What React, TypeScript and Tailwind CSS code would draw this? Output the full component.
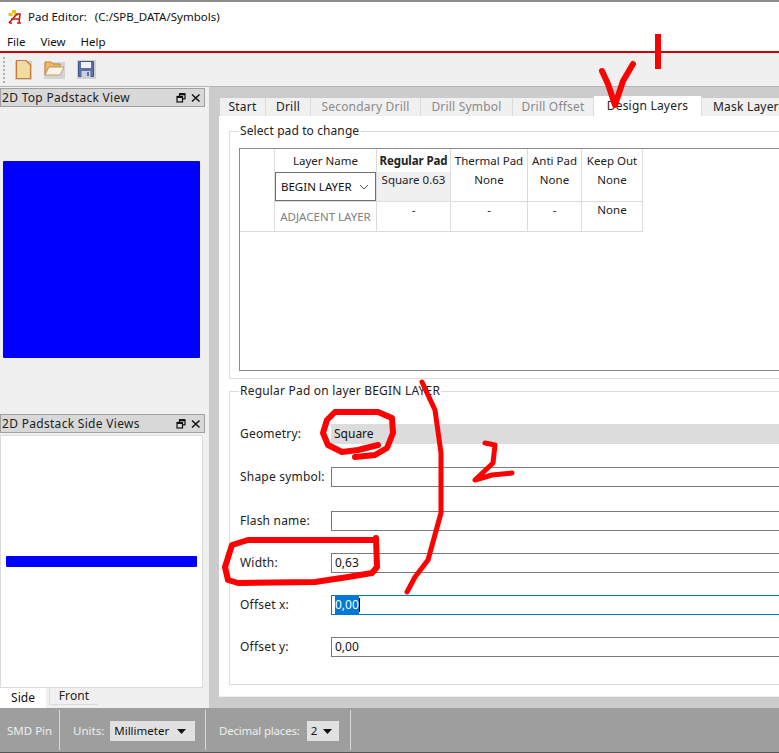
import React from "react";

const font = { fontFamily: '"Noto Sans", "Open Sans", sans-serif' };

function DockHeader({ title }: { title: string }) {
  return (
    <div className="flex h-[19px] w-[205px] items-center justify-between border border-[#a0a0a0] bg-[#d8d8d8] pl-[1px] pr-[3px] text-[12px] tracking-[0.3px] text-[#222]">
      <span>{title}</span>
      <span className="flex items-center gap-[5px]">
        <svg width="10" height="10" viewBox="0 0 10 10" fill="none" stroke="#111" strokeWidth="1.2">
          <rect x="3.5" y="0.8" width="5.5" height="5" />
          <rect x="1" y="3.5" width="5.5" height="5.5" fill="#d8d8d8" />
          <path d="M1 4h5.5M3.5 1.2h5.5" strokeWidth="2" />
        </svg>
        <svg width="10" height="10" viewBox="0 0 10 10" stroke="#111" strokeWidth="1.5">
          <path d="M1 1.5l7.5 7M8.5 1.5L1 8.5" />
        </svg>
      </span>
    </div>
  );
}

function FormRow({ label, value, className, inputClass, selected }: { label: string; value?: string; className: string; inputClass: string; selected?: boolean }) {
  return (
    <div className={`flex h-[20px] items-center ${className}`}>
      <div className="w-[101px] shrink-0 whitespace-nowrap pl-[10px] text-[12px] tracking-[0.2px] text-[#222]">{label}</div>
      <div className={`flex h-[20px] w-[460px] shrink-0 items-center pl-[3px] text-[12px] text-[#111] ${inputClass}`}>
        {selected ? (
          <>
            <span className="bg-[#0078d7] text-white">{value}</span>
            <span className="h-[14px] w-[1px] bg-black" />
          </>
        ) : (
          value
        )}
      </div>
    </div>
  );
}

function Cell({ className, children }: { className: string; children?: React.ReactNode }) {
  return <div className={`border-r border-b border-[#dcdcdc] text-center text-[11.5px] text-[#222] ${className}`}>{children}</div>;
}

function Tab({ label, className }: { label: string; className: string }) {
  return <div className={`flex shrink-0 items-center justify-center whitespace-nowrap border-r border-[#dcdcdc] text-[12px] tracking-[0.2px] ${className}`}>{label}</div>;
}

export default function App() {
  return (
    <div style={font} className="relative flex h-[753px] w-[779px] flex-col overflow-hidden bg-[#f0f0f0]">
      {/* Title bar */}
      <div className="h-[2px] shrink-0 bg-[#8c8c8c]" />
      <div className="flex h-[29px] shrink-0 items-center bg-white pl-[8px] text-[11.5px] text-[#111]">
        <svg width="15" height="15" viewBox="0 0 15 15" className="mr-[5px]">
          <rect x="4" y="1" width="4" height="3" fill="#e8c020" />
          <rect x="0.5" y="4" width="4" height="3" fill="#e8c020" />
          <rect x="6" y="4" width="4" height="3" fill="#e8c020" />
          <path d="M1 14L9 5l3 0-1 9M3 10h9M1 14h3M9 14h4" stroke="#d01818" strokeWidth="1.6" fill="none" />
        </svg>
        <span className="mr-[8px]">Pad Editor:</span>
        <span>(C:/SPB_DATA/Symbols)</span>
      </div>
      {/* Menu */}
      <div className="flex h-[20px] shrink-0 items-center gap-[15px] bg-white pl-[7px] pt-[2px] text-[11.5px] text-[#111]">
        <span>File</span>
        <span>View</span>
        <span>Help</span>
      </div>
      <div className="h-[2px] shrink-0 bg-[#d00000]" />
      {/* Toolbar */}
      <div className="flex h-[33px] shrink-0 items-center bg-[#f0f0f0] pl-[3px]">
        <div className="mr-[10px] h-[26px] w-[2px] border-l-2 border-dotted border-[#b0b0b0]" />
        <div className="flex items-center gap-[12px]">
          <svg width="17" height="20" viewBox="0 0 17 20">
            <rect x="0" y="1" width="17" height="19" fill="#d0d0d0" />
            <path d="M1.5 0.5H11l4.5 4.5v13.5h-14z" fill="#f0dca0" stroke="#c87838" strokeWidth="1.2" />
          </svg>
          <svg width="21" height="19" viewBox="0 0 21 19">
            <rect x="0" y="2" width="21" height="17" fill="#d4d4d4" />
            <path d="M1 2h6l2 2h7v3H5L1 15z" fill="#f0b860" stroke="#c88030" />
            <path d="M5 7h15l-4 8H1z" fill="#f8f4e8" stroke="#c0a070" />
          </svg>
          <svg width="19" height="19" viewBox="0 0 19 19">
            <rect x="0" y="0" width="19" height="19" fill="#d0d0d0" />
            <path d="M1.5 1.5h15v15h-15z" fill="#5a70a8" stroke="#44588c" />
            <rect x="4" y="2" width="10" height="6" fill="#f2f2f2" />
            <rect x="4.5" y="11" width="9" height="6" fill="#c8d0dc" />
            <rect x="10" y="12" width="2" height="4" fill="#5a70a8" />
          </svg>
        </div>
      </div>

      {/* Main */}
      <div className="flex min-h-0 flex-1 border-t border-[#b4b4b4]">
        {/* Left docks */}
        <div className="flex w-[209px] shrink-0 flex-col bg-[#f0f0f0] pt-[1px]">
          <DockHeader title="2D Top Padstack View" />
          <div className="flex h-[308px] items-end pb-[56px] pl-[3px]">
            <div className="h-[197px] w-[197px] rounded-[1px] bg-[#0000ff]" />
          </div>
          <DockHeader title="2D Padstack Side Views" />
          <div className="mt-[2px] flex h-[253px] w-[203px] items-start border border-[#dcdcdc] bg-white pl-[5px] pt-[120px]">
            <div className="h-[11px] w-[191px] rounded-[1px] bg-[#0000ff]" />
          </div>
          <div className="flex items-start">
            <div className="flex h-[20px] w-[46px] items-center justify-center bg-white text-[12px] text-[#111]">Side</div>
            <div className="ml-[3px] flex h-[17px] w-[49px] items-center justify-center border-b border-l border-[#dcdcdc] text-[12px] tracking-[0.1px] text-[#222]">Front</div>
          </div>
        </div>

        {/* Central area */}
        <div className="min-w-0 flex-1 bg-[#cccccc] pl-[10px] pt-[11px]">
          <div className="flex h-[18px] pl-[1px] text-[#222]">
            <Tab label="Start" className="h-[18px] w-[46px] self-end bg-[#f0f0f0]" />
            <Tab label="Drill" className="h-[18px] w-[45px] self-end bg-[#f0f0f0]" />
            <Tab label="Secondary Drill" className="h-[18px] w-[110px] self-end bg-[#f0f0f0] text-[#8a8a8a]" />
            <Tab label="Drill Symbol" className="h-[18px] w-[92px] self-end bg-[#f0f0f0] text-[#8a8a8a]" />
            <Tab label="Drill Offset" className="h-[18px] w-[81px] self-end bg-[#f0f0f0] text-[#8a8a8a]" />
            <Tab label="Design Layers" className="relative -mt-[2px] h-[20px] w-[108px] self-end bg-white" />
            <Tab label="Mask Layers" className="h-[18px] w-[100px] self-end justify-start bg-[#f0f0f0] pl-[11px]" />
          </div>
          <div className="h-[581px] border-b border-[#f0f0f0] bg-white pl-[10px] pt-[7px]">
            <fieldset className="h-[256px] w-[600px] border border-[#dcdcdc] pl-[9px]">
              <legend className="px-[1px] text-[12px] leading-[16px] tracking-[0.1px] text-[#222]">Select pad to change</legend>
              <div className="mt-[9px] h-[223px] w-[600px] border border-[#8a8a8a] bg-white">
                <div className="grid w-[403px] grid-cols-[35px_102px_74px_77px_54px_61px] grid-rows-[23px_30px_30px]">
                  <Cell className="row-span-2 !border-b-0" />
                  <Cell className="leading-[23px] !border-b-0">Layer Name</Cell>
                  <Cell className="font-bold leading-[23px] tracking-[-0.1px] !border-b-0">Regular Pad</Cell>
                  <Cell className="leading-[23px] !border-b-0">Thermal Pad</Cell>
                  <Cell className="leading-[23px] !border-b-0">Anti Pad</Cell>
                  <Cell className="leading-[23px] !border-b-0">Keep Out</Cell>
                  <Cell className="!border-r-[#dcdcdc]">
                    <div className="flex h-[29px] w-[101px] items-center justify-between border border-[#707070] bg-white pl-[5px] pr-[6px] text-[11.5px] text-[#111]">
                      <span>BEGIN LAYER</span>
                      <svg width="10" height="6" viewBox="0 0 10 6" fill="none" stroke="#555">
                        <path d="M1 1l4 4 4-4" />
                      </svg>
                    </div>
                  </Cell>
                  <Cell className="bg-[#f0f0f0] pb-[8px] leading-[16px]">Square 0.63</Cell>
                  <Cell className="leading-[16px]">None</Cell>
                  <Cell className="leading-[16px]">None</Cell>
                  <Cell className="leading-[16px]">None</Cell>
                  <Cell />
                  <Cell className="leading-[30px] !text-[#808080]">ADJACENT LAYER</Cell>
                  <Cell className="leading-[16px]">-</Cell>
                  <Cell className="leading-[16px]">-</Cell>
                  <Cell className="leading-[16px]">-</Cell>
                  <Cell className="leading-[16px]">None</Cell>
                </div>
              </div>
            </fieldset>
            <fieldset className="mt-[4px] h-[302px] w-[600px] border border-[#dcdcdc]">
              <legend className="ml-[9px] px-[1px] text-[12px] leading-[16px] tracking-[0.2px] text-[#222]">Regular Pad on layer BEGIN LAYER</legend>
              <div className="pt-[25px]">
                <FormRow label="Geometry:" value="Square" className="" inputClass="bg-[#dcdcdc]" />
                <FormRow label="Shape symbol:" className="mt-[23px]" inputClass="border border-[#7a7a7a]" />
                <FormRow label="Flash name:" className="mt-[24px]" inputClass="border border-[#7a7a7a]" />
                <FormRow label="Width:" value="0,63" className="mt-[22px]" inputClass="border border-[#7a7a7a]" />
                <FormRow label="Offset x:" value="0,00" selected className="mt-[22px]" inputClass="border border-[#0078d7]" />
                <FormRow label="Offset y:" value="0,00" className="mt-[22px]" inputClass="border border-[#7a7a7a]" />
              </div>
            </fieldset>
          </div>
        </div>
      </div>

      {/* Status bar */}
      <div className="flex h-[45px] shrink-0 items-center border-b border-[#555] bg-[#9e9e9e] text-[11.5px] text-[#eeeeee]">
        <div className="flex h-[40px] w-[60px] items-center border-r border-[#d8d8d8] pl-[7px] pt-[1px]">SMD Pin</div>
        <div className="flex h-[40px] w-[146px] items-center border-r border-[#d8d8d8] pl-[13px] pt-[2px]">
          <span className="mr-[6px]">Units:</span>
          <div className="flex h-[20px] w-[85px] items-center justify-between bg-[#e1e1e1] pl-[4px] pr-[9px] text-[#111]">
            <span>Millimeter</span>
            <svg width="9" height="5" viewBox="0 0 9 5"><path d="M0 0h9L4.5 5z" fill="#111" /></svg>
          </div>
        </div>
        <div className="flex h-[40px] w-[145px] items-center border-r border-[#d8d8d8] pl-[13px] pt-[2px]">
          <span className="mr-[7px] whitespace-nowrap tracking-[-0.2px]">Decimal places:</span>
          <div className="flex h-[20px] w-[32px] shrink-0 items-center justify-between bg-[#e1e1e1] pl-[4px] pr-[7px] text-[#111]">
            <span>2</span>
            <svg width="9" height="5" viewBox="0 0 9 5"><path d="M0 0h9L4.5 5z" fill="#111" /></svg>
          </div>
        </div>
      </div>

      {/* Hand-drawn red annotations on top of the screenshot */}
      <svg className="absolute left-0 top-0" width="779" height="753" viewBox="0 0 779 753" fill="none" stroke="#ff0000" strokeLinecap="round" strokeLinejoin="round">
        <path d="M658 34v35" strokeWidth="6" strokeLinecap="butt" />
        <path d="M602 71l6 13 7 21 8-24 10-17" strokeWidth="6" />
        <path d="M378 445l-20 5-16 2-14-7-5-12 4-13 8-8h43l14 6 1 15-6 15-12 7-20 2" strokeWidth="6" />
        <path d="M375 540H248l-16 5-7 22 3 13 10 3 77-1 33-5 24-4 5-6-1-29" strokeWidth="6" />
        <path d="M422 382l13 28 6 43v60l-13 47-13 17-8 15" strokeWidth="5" />
        <path d="M485 443l10 2-2 18-18 17 17-5 20-2" strokeWidth="5" />
      </svg>
    </div>
  );
}
